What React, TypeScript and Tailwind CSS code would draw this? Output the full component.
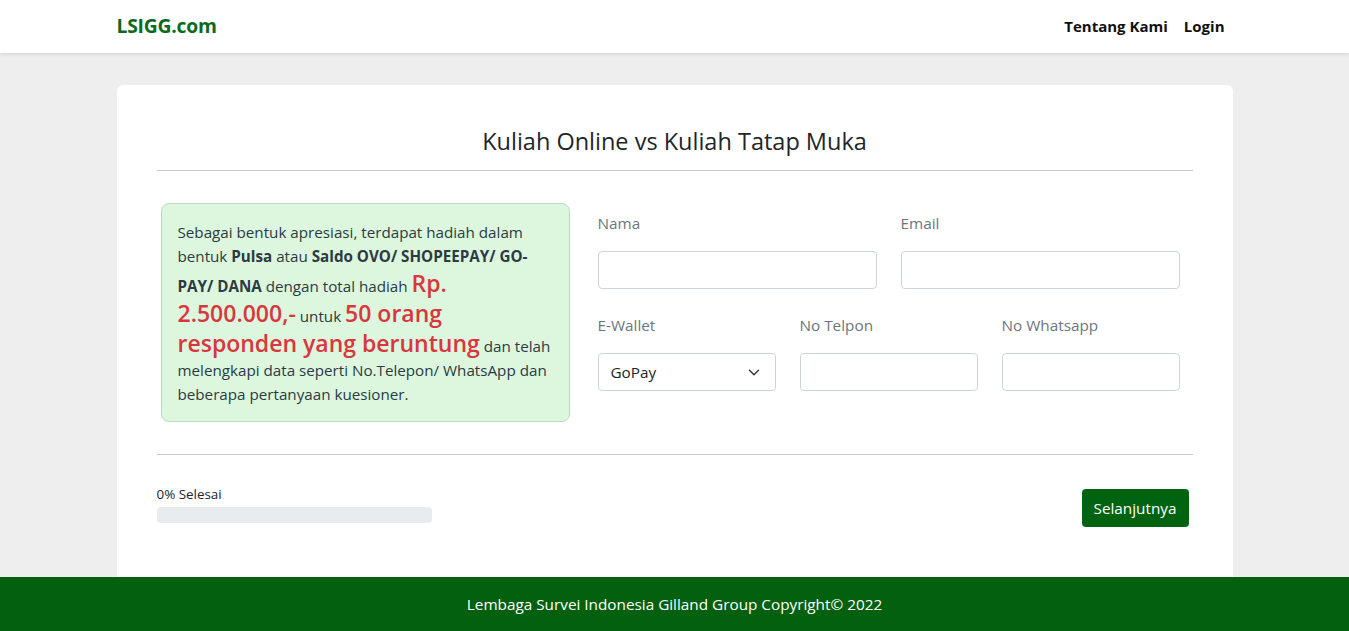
import React, { useState } from "react";

const font = { fontFamily: '"Open Sans", "Noto Sans", sans-serif' };

function Field({ label, children }: { label: string; children: React.ReactNode }) {
  return (
    <div className="flex flex-col">
      <label className="text-[15.3px] leading-6 text-[#6c757d] mb-4">{label}</label>
      {children}
    </div>
  );
}

export default function App() {
  const [wallet, setWallet] = useState("GoPay");

  return (
    <div className="h-screen flex flex-col bg-[#eeeeee] text-[#212529] overflow-hidden" style={font}>
      <nav className="h-[53px] shrink-0 bg-white shadow-[0_1px_4px_rgba(0,0,0,0.12)] relative z-10">
        <div className="w-[1140px] mx-auto px-3 h-full flex items-center justify-between">
          <a className="text-[19.3px] font-bold text-[#0b6b1d] tracking-[-0.2px]">LSIGG.com</a>
          <div className="flex items-center gap-4 text-[15px] font-bold text-[#111] pr-2">
            <a>Tentang Kami</a>
            <a>Login</a>
          </div>
        </div>
      </nav>

      <main className="flex-1 overflow-hidden pt-8">
        <div className="w-[1140px] mx-auto px-3">
          <div className="bg-white rounded-md px-10 pt-10 pb-16">
            <h1 className="text-center text-[23.5px] font-medium leading-8 text-[#212529]">
              Kuliah Online vs Kuliah Tatap Muka
            </h1>
            <hr className="mt-[13px] border-t border-[#c8c8c8]" />

            <div className="flex mt-8 gap-6">
              <div className="w-[417px] shrink-0 px-1">
                <div className="bg-[#dcf7dd] border border-[#b9dbbc] rounded-lg px-4 pt-[16px] pb-[15px] text-[15.2px] leading-[24px] text-[#2b3a44]">
                  Sebagai bentuk apresiasi, terdapat hadiah dalam bentuk <b>Pulsa</b> atau{" "}
                  <b>Saldo OVO/ SHOPEEPAY/ GO-PAY/ DANA</b> dengan total hadiah{" "}
                  <span className="text-[23px] leading-[30px] font-semibold text-[#d9363e]">Rp. 2.500.000,-</span>{" "}
                  untuk{" "}
                  <span className="text-[23px] leading-[30px] font-semibold text-[#d9363e]">
                    50 orang responden yang beruntung
                  </span>{" "}
                  dan telah melengkapi data seperti No.Telepon/ WhatsApp dan beberapa pertanyaan kuesioner.
                </div>
              </div>

              <div className="w-[582px] pt-[8px]">
                <div className="grid grid-cols-2 gap-6">
                  <Field label="Nama">
                    <input className="h-[38px] border border-[#ced4da] rounded-[4px] px-3 outline-none" />
                  </Field>
                  <Field label="Email">
                    <input className="h-[38px] border border-[#ced4da] rounded-[4px] px-3 outline-none" />
                  </Field>
                </div>
                <div className="grid grid-cols-3 gap-6 mt-6">
                  <Field label="E-Wallet">
                    <div className="relative">
                      <select
                        value={wallet}
                        onChange={(e) => setWallet(e.target.value)}
                        className="appearance-none w-full h-[38px] border border-[#ced4da] rounded-[4px] pl-3 pr-8 text-[15.3px] text-[#212529] bg-white outline-none"
                      >
                        <option>GoPay</option>
                        <option>OVO</option>
                        <option>ShopeePay</option>
                        <option>DANA</option>
                      </select>
                      <svg
                        className="absolute right-[16px] top-[15px] pointer-events-none"
                        width="12"
                        height="9"
                        viewBox="0 0 16 12"
                        fill="none"
                        stroke="#343a40"
                        strokeWidth="2"
                        strokeLinecap="round"
                        strokeLinejoin="round"
                      >
                        <path d="M2 3l6 6 6-6" />
                      </svg>
                    </div>
                  </Field>
                  <Field label="No Telpon">
                    <input className="h-[38px] border border-[#ced4da] rounded-[4px] px-3 outline-none" />
                  </Field>
                  <Field label="No Whatsapp">
                    <input className="h-[38px] border border-[#ced4da] rounded-[4px] px-3 outline-none" />
                  </Field>
                </div>
              </div>
            </div>

            <hr className="mt-[32px] border-t border-[#c8c8c8]" />

            <div className="flex items-start justify-between mt-[29px]">
              <div className="w-[275px]">
                <div className="text-[13.4px] leading-[20px] text-[#212529] mb-[3px]">0% Selesai</div>
                <div className="h-4 rounded-[4px] bg-[#e9ecef]" />
              </div>
              <button className="h-[38px] px-3 mr-1 mt-[5px] rounded-[4px] bg-[#006312] text-white text-[15.3px]">
                Selanjutnya
              </button>
            </div>
          </div>
        </div>
      </main>

      <footer className="h-[54px] shrink-0 bg-[#03600e] text-white flex items-center justify-center text-[15.3px]">
        Lembaga Survei Indonesia Gilland Group Copyright© 2022
      </footer>
    </div>
  );
}
